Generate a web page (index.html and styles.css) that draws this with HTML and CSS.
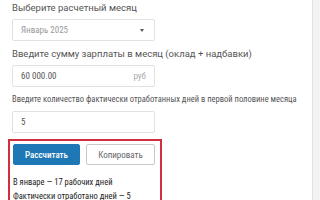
FILE: index.html
```html
<!DOCTYPE html>
<html lang="ru">
<head>
    <meta charset="UTF-8">
    <meta name="viewport" content="width=device-width, initial-scale=1.0">
    <title>Расчет зарплаты</title>
    <link rel="stylesheet" href="styles.css">
</head>
<body>
    <div class="page">
        <div class="field">
            <label class="field-label">Выберите расчетный месяц</label>
            <div class="select-box">
                <span class="select-value">Январь 2025</span>
                <span class="select-arrow"></span>
            </div>
        </div>

        <div class="field">
            <label class="field-label">Введите сумму зарплаты в месяц (оклад + надбавки)</label>
            <div class="input-box">
                <span class="input-value">60 000.00</span>
                <span class="input-suffix">руб</span>
            </div>
        </div>

        <div class="field">
            <label class="field-label field-label-long">Введите количество фактически отработанных дней в первой половине месяца</label>
            <div class="input-box">
                <span class="input-value">5</span>
            </div>
        </div>

        <div class="result-box">
            <div class="buttons">
                <button class="btn btn-primary">Рассчитать</button>
                <button class="btn btn-outline">Копировать</button>
            </div>
            <p class="result-line">В январе — 17 рабочих дней</p>
            <p class="result-line">Фактически отработано дней — 5</p>
        </div>
    </div>
</body>
</html>
```

FILE: styles.css
```css
html, body {
    margin: 0;
    padding: 0;
}

body {
    font-family: "Roboto Condensed", Roboto, "Liberation Sans", sans-serif;
    font-size: 9px;
    color: #333;
    background-color: #f3f3f3;
    height: 200px;
    overflow: hidden;
}

.page {
    width: 300px;
    min-height: 200px;
    padding: 1px 0 0 12px;
    background-color: #fff;
    border-right: 1px solid #e2e2e2;
}

.field {
    margin-bottom: 6px;
}

.field-label {
    display: block;
    font-family: Roboto, "Liberation Sans", sans-serif;
    font-size: 9.5px;
    line-height: 13px;
    color: #555;
    margin-bottom: 5px;
    white-space: nowrap;
}

.field-label-long {
    font-family: "Roboto Condensed", Roboto, sans-serif;
    font-size: 8.5px;
}

.select-box,
.input-box {
    width: 143px;
    height: 22px;
    box-sizing: border-box;
    border: 1px solid #e2e2e2;
    border-radius: 2px;
    background-color: #fff;
    display: flex;
    align-items: center;
    padding: 0 8px;
}

.select-value {
    flex-grow: 1;
    color: #999;
}

.select-arrow {
    width: 0;
    height: 0;
    border-left: 2.5px solid transparent;
    border-right: 2.5px solid transparent;
    border-top: 3px solid #555;
    margin-right: 2px;
}

.input-value {
    flex-grow: 1;
    color: #555;
}

.input-suffix {
    color: #aaa;
}

.result-box {
    width: 154px;
    box-sizing: border-box;
    margin-left: -4px;
    border: 2px solid #d0303e;
    padding: 3px 3px 0;
}

.buttons {
    display: flex;
    gap: 6px;
}

.btn {
    height: 21px;
    border-radius: 2px;
    font-family: inherit;
    font-size: 9px;
    cursor: pointer;
    padding: 0;
}

.btn-primary {
    width: 67px;
    background-color: #1e78b5;
    border: 1px solid #1e78b5;
    color: #fff;
    font-weight: 500;
}

.btn-outline {
    width: 69px;
    background-color: #fff;
    border: 1px solid #c9c9c9;
    color: #666;
}

.result-line {
    margin: 0;
    font-size: 8.5px;
    line-height: 14px;
    color: #222;
}

.buttons + .result-line {
    margin-top: 10px;
}
```
